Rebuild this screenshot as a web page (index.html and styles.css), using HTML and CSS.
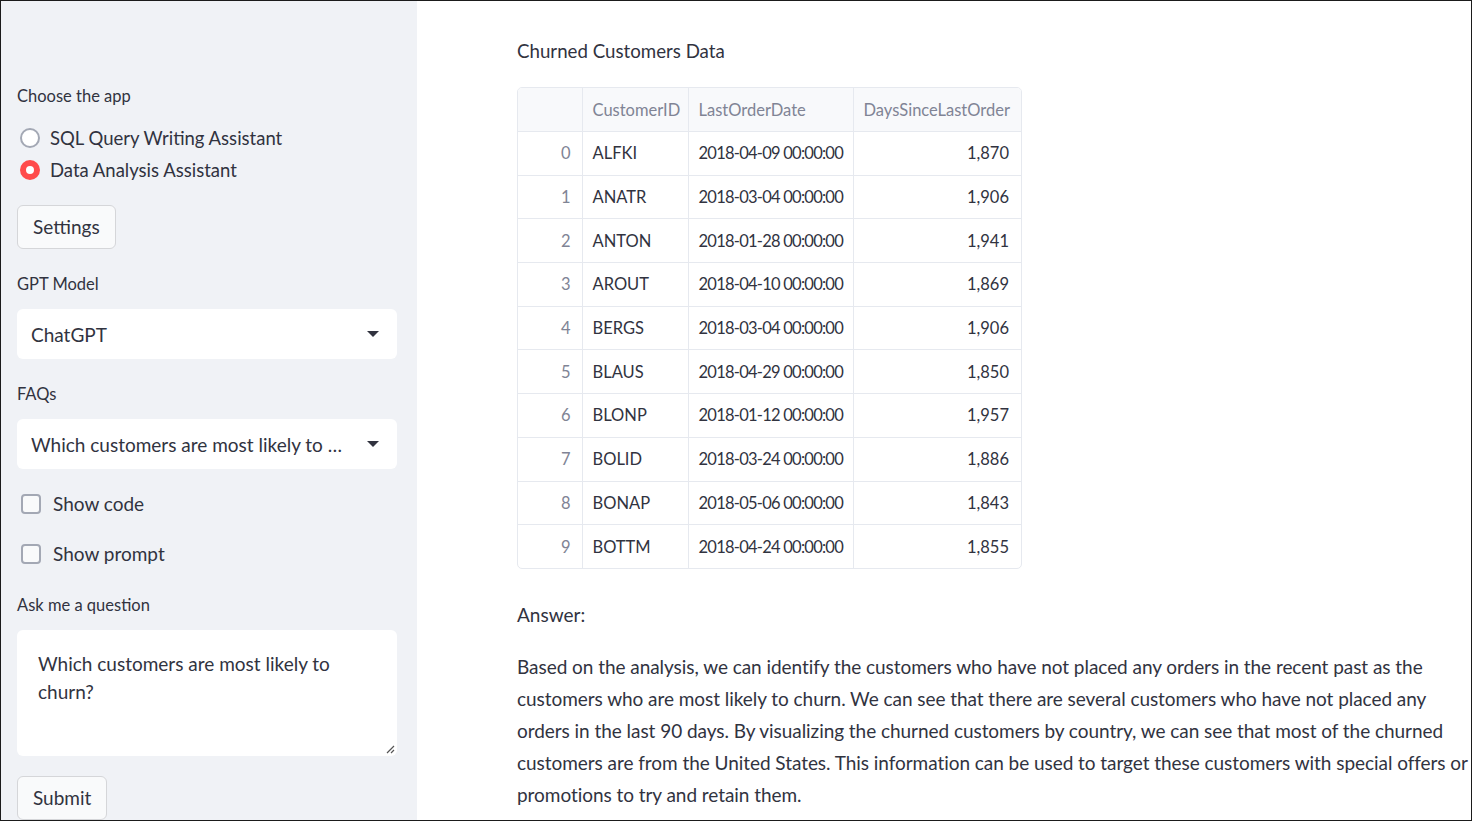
FILE: index.html
```html
<!DOCTYPE html>
<html>
<head>
<meta charset="utf-8">
<link rel="stylesheet" href="styles.css">
</head>
<body>
<div class="frame">
  <aside class="sidebar">
    <div class="label first">Choose the app</div>
    <div class="radios">
      <div class="radio"><span class="dot"></span><span>SQL Query Writing Assistant</span></div>
      <div class="radio on"><span class="dot"></span><span>Data Analysis Assistant</span></div>
    </div>
    <button class="btn settings">Settings</button>
    <div class="label">GPT Model</div>
    <div class="select"><span class="val">ChatGPT</span><span class="caret"></span></div>
    <div class="label">FAQs</div>
    <div class="select"><span class="val">Which customers are most likely to churn?</span><span class="caret"></span></div>
    <div class="check c1"><span class="box"></span><span>Show code</span></div>
    <div class="check c2"><span class="box"></span><span>Show prompt</span></div>
    <div class="label ask">Ask me a question</div>
    <div class="textarea">Which customers are most likely to<br>churn?<svg class="grip" width="10" height="10" viewBox="0 0 10 10"><path d="M9 2 L2 9 M9 6 L6 9" stroke="#555" stroke-width="1.2" fill="none"/></svg></div>
    <button class="btn submit">Submit</button>
  </aside>
  <main class="main">
    <div class="title">Churned Customers Data</div>
    <div class="tablewrap">
      <table class="df">
        <colgroup><col class="w0"><col class="w1"><col class="w2"><col class="w3"></colgroup>
        <thead><tr><th></th><th>CustomerID</th><th>LastOrderDate</th><th>DaysSinceLastOrder</th></tr></thead>
        <tbody>
          <tr><td class="idx">0</td><td>ALFKI</td><td class="date">2018-04-09 00:00:00</td><td class="num">1,870</td></tr>
          <tr><td class="idx">1</td><td>ANATR</td><td class="date">2018-03-04 00:00:00</td><td class="num">1,906</td></tr>
          <tr><td class="idx">2</td><td>ANTON</td><td class="date">2018-01-28 00:00:00</td><td class="num">1,941</td></tr>
          <tr><td class="idx">3</td><td>AROUT</td><td class="date">2018-04-10 00:00:00</td><td class="num">1,869</td></tr>
          <tr><td class="idx">4</td><td>BERGS</td><td class="date">2018-03-04 00:00:00</td><td class="num">1,906</td></tr>
          <tr><td class="idx">5</td><td>BLAUS</td><td class="date">2018-04-29 00:00:00</td><td class="num">1,850</td></tr>
          <tr><td class="idx">6</td><td>BLONP</td><td class="date">2018-01-12 00:00:00</td><td class="num">1,957</td></tr>
          <tr><td class="idx">7</td><td>BOLID</td><td class="date">2018-03-24 00:00:00</td><td class="num">1,886</td></tr>
          <tr><td class="idx">8</td><td>BONAP</td><td class="date">2018-05-06 00:00:00</td><td class="num">1,843</td></tr>
          <tr><td class="idx">9</td><td>BOTTM</td><td class="date">2018-04-24 00:00:00</td><td class="num">1,855</td></tr>
        </tbody>
      </table>
    </div>
    <div class="answer">Answer:</div>
    <p class="para">Based on the analysis, we can identify the customers who have not placed any orders in the recent past as the<br>customers who are most likely to churn. We can see that there are several customers who have not placed any<br>orders in the last 90 days. By visualizing the churned customers by country, we can see that most of the churned<br>customers are from the United States. This information can be used to target these customers with special offers or<br>promotions to try and retain them.</p>
  </main>
</div>
</body>
</html>
```
FILE: styles.css
```css
html, body {
  margin: 0;
  padding: 0;
  background: #fff;
}
.frame {
  width: 1472px;
  height: 821px;
  box-sizing: border-box;
  border: 1px solid #1b1b1b;
  display: flex;
  overflow: hidden;
  font-family: Lato, "Noto Sans", sans-serif;
  color: #31333f;
}
.sidebar {
  width: 416px;
  flex: none;
  background: #f0f2f6;
  box-sizing: border-box;
  padding: 0 20px 0 16px;
  display: flex;
  flex-direction: column;
  align-items: flex-start;
}
.label {
  font-size: 16.5px;
  line-height: 22px;
  height: 22px;
  margin-top: 24px;
  white-space: nowrap;
}
.label.first { margin-top: 84px; }
.label.ask { margin-top: 27px; }
.radios {
  margin-top: 15px;
  display: flex;
  flex-direction: column;
}
.radio {
  height: 32px;
  display: flex;
  align-items: center;
  gap: 10px;
  font-size: 18.5px;
  padding-left: 3px;
  white-space: nowrap;
}
.radio .dot {
  width: 20px;
  height: 20px;
  box-sizing: border-box;
  border-radius: 50%;
  border: 2px solid #a3a8b4;
  background: #fff;
  flex: none;
}
.radio.on .dot {
  border: 6.5px solid #ff4b4b;
  background: #fff;
}
.btn {
  font-family: inherit;
  font-size: 19px;
  color: #31333f;
  background: #f9fafb;
  border: 1px solid #d5d6d9;
  border-radius: 6px;
  height: 44px;
  padding: 0 15px;
  line-height: 42px;
}
.settings { margin-top: 19px; }
.submit { margin-top: 20px; flex: none; }
.select {
  margin-top: 14px;
  width: 100%;
  height: 50px;
  flex: none;
  box-sizing: border-box;
  background: #fff;
  border-radius: 6px;
  display: flex;
  align-items: center;
  padding: 0 18px 0 14px;
  gap: 22px;
  font-size: 19px;
}
.select .val {
  flex: 1;
  min-width: 0;
  white-space: nowrap;
  overflow: hidden;
  text-overflow: ellipsis;
}
.caret {
  flex: none;
  width: 0;
  height: 0;
  border-left: 6px solid transparent;
  border-right: 6px solid transparent;
  border-top: 6px solid #31333f;
}
.check {
  height: 28px;
  display: flex;
  align-items: center;
  gap: 12px;
  font-size: 19px;
  padding-left: 4px;
  white-space: nowrap;
}
.check.c1 { margin-top: 21px; }
.check.c2 { margin-top: 23px; }
.check .box {
  width: 20px;
  height: 20px;
  box-sizing: border-box;
  border: 2px solid #a3a8b4;
  border-radius: 4px;
  background: #f9fafb;
}
.textarea {
  position: relative;
  margin-top: 14px;
  width: 100%;
  height: 126px;
  flex: none;
  box-sizing: border-box;
  background: #fff;
  border-radius: 6px;
  padding: 20px 21px;
  font-size: 19px;
  line-height: 28px;
}
.grip {
  position: absolute;
  right: 2px;
  bottom: 2px;
}
.main {
  flex: 1;
  padding-left: 100px;
  min-width: 0;
}
.title {
  margin-top: 34px;
  font-size: 18.7px;
  line-height: 32px;
}
.tablewrap {
  margin-top: 20px;
  width: 503px;
  border: 1px solid #e6e9ef;
  border-radius: 5px;
  overflow: hidden;
}
.df {
  border-collapse: collapse;
  table-layout: fixed;
  width: 503px;
  font-size: 16.5px;
}
.w0 { width: 64px; }
.w1 { width: 106px; }
.w2 { width: 165px; }
.w3 { width: 168px; }
.df th, .df td {
  height: 43.7px;
  box-sizing: border-box;
  border-right: 1px solid #e6e9ef;
  border-bottom: 1px solid #e6e9ef;
  padding: 0 10px;
  text-align: left;
  white-space: nowrap;
  font-weight: normal;
}
.df th { height: 43.5px; }
.df th:last-child, .df td:last-child { border-right: none; }
.df th {
  background: #f8f9fb;
  color: #808495;
}
.df tbody tr:last-child td { border-bottom: none; }
.df td.idx {
  color: #808495;
  text-align: right;
  padding-right: 11px;
}
.df td.date { letter-spacing: -0.75px; }
.df td.num {
  text-align: right;
  padding-right: 12px;
}
.answer {
  margin-top: 30px;
  font-size: 19px;
  line-height: 32px;
}
.para {
  margin: 20px 0 0;
  font-size: 19px;
  line-height: 32px;
  letter-spacing: -0.05px;
  white-space: nowrap;
}
```
